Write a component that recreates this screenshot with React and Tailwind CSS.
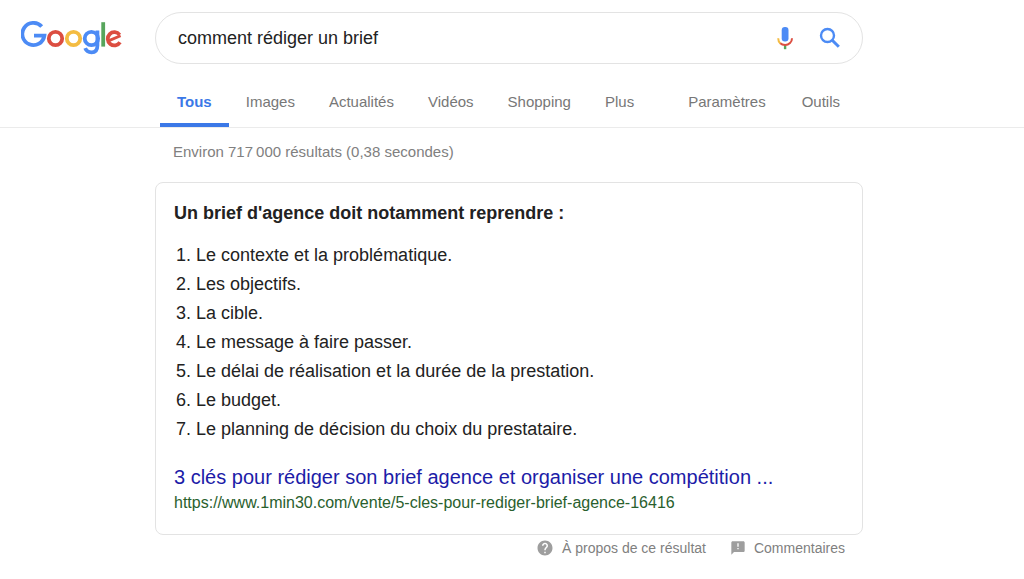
import { useState } from 'react'

const tabs = [
  { label: 'Tous', active: true },
  { label: 'Images' },
  { label: 'Actualités' },
  { label: 'Vidéos' },
  { label: 'Shopping' },
  { label: 'Plus' },
]

const tools = ['Paramètres', 'Outils']

const steps = [
  'Le contexte et la problématique.',
  'Les objectifs.',
  'La cible.',
  'Le message à faire passer.',
  'Le délai de réalisation et la durée de la prestation.',
  'Le budget.',
  'Le planning de décision du choix du prestataire.',
]

function Logo() {
  return (
    <svg viewBox="0 0 102 34" className="h-[34px] w-[102px]" fill="none" strokeWidth="3.8" role="img" aria-label="Google">
      <path d="M20.7 5.6A11.1 11.1 0 1 0 23.4 14.6H13" stroke="#4c8bf5" />
      <circle cx="34.5" cy="17.5" r="6.7" stroke="#dc4e41" />
      <circle cx="52.5" cy="17.5" r="6.7" stroke="#f4bc42" />
      <g stroke="#4c8bf5">
        <circle cx="70.4" cy="17.5" r="6.7" />
        <path d="M76.4 9.6V24.4C76.4 29.4 74 31.3 70.5 31.3C67.4 31.3 65.1 29.6 64.2 27.2" />
      </g>
      <path d="M82.2 1.2V25.6" stroke="#57a55c" />
      <path d="M99 21.2A6.6 6.6 0 1 1 98.6 13.8" stroke="#dc4e41" />
      <path d="M88 19.6L99.6 14.8" stroke="#dc4e41" strokeWidth="2.8" />
    </svg>
  )
}

function MicIcon() {
  return (
    <svg viewBox="0 0 24 24" className="h-6 w-6" fill="none" aria-hidden="true">
      <rect x="8.7" y="1" width="6.8" height="14.4" rx="3.2" fill="#4c8bf5" />
      <path d="M12.1 18.5V23.2" stroke="#57a55c" strokeWidth="2.4" />
      <path d="M5.2 12.2C5.2 14.4 6 16.2 7.4 17.4" stroke="#f4bc42" strokeWidth="2" />
      <path d="M7.3 17.3C8.5 18.5 10.2 19 12.1 19C16 19 19 16.1 19 12.2" stroke="#dc4e41" strokeWidth="2" />
    </svg>
  )
}

function SearchIcon() {
  return (
    <svg viewBox="0 0 24 24" className="h-6 w-6" fill="none" stroke="#4c8bf5" aria-hidden="true">
      <circle cx="9.5" cy="9.5" r="6.5" strokeWidth="2.4" />
      <path d="M14 14L20.8 20.8" strokeWidth="3" />
    </svg>
  )
}

function HelpIcon() {
  return (
    <svg viewBox="0 0 24 24" className="h-[18px] w-[18px]" fill="#9e9e9e" aria-hidden="true">
      <path d="M12 2C6.48 2 2 6.48 2 12s4.48 10 10 10 10-4.48 10-10S17.52 2 12 2zm1 17h-2v-2h2v2zm2.07-7.75l-.9.92C13.45 12.9 13 13.5 13 15h-2v-.5c0-1.1.45-2.1 1.17-2.83l1.24-1.26c.37-.36.59-.86.59-1.41 0-1.1-.9-2-2-2s-2 .9-2 2H8c0-2.21 1.79-4 4-4s4 1.79 4 4c0 .88-.36 1.68-.93 2.25z" />
    </svg>
  )
}

function FeedbackIcon() {
  return (
    <svg viewBox="0 0 24 24" className="h-4 w-4" fill="#9e9e9e" aria-hidden="true">
      <path d="M20 2H4c-1.1 0-2 .9-2 2v18l4-4h14c1.1 0 2-.9 2-2V4c0-1.1-.9-2-2-2zm-7 12h-2v-2h2v2zm0-4h-2V5h2v5z" />
    </svg>
  )
}

export default function App() {
  const [query, setQuery] = useState('comment rédiger un brief')

  return (
    <div className="min-h-screen bg-white font-['Liberation_Sans',Arial,sans-serif] text-[#222222]">
      <header className="border-b border-[#ebebeb]">
        <div className="flex pt-3">
          <a href="#" className="w-[155px] shrink-0 pt-[9px] pl-[21px]">
            <Logo />
          </a>
          <form
            role="search"
            onSubmit={(e) => e.preventDefault()}
            className="flex h-[52px] max-w-[708px] flex-1 items-center rounded-full border border-[#e3e3e3] pr-5 pl-[22px]"
          >
            <input
              type="text"
              aria-label="Rechercher"
              value={query}
              onChange={(e) => setQuery(e.target.value)}
              className="min-w-0 flex-1 bg-transparent text-lg outline-none"
            />
            <button type="button" aria-label="Recherche vocale" className="mr-[21px]">
              <MicIcon />
            </button>
            <button type="submit" aria-label="Recherche Google">
              <SearchIcon />
            </button>
          </form>
        </div>

        <nav className="ml-40 flex max-w-[700px] items-end justify-between pt-4 pr-5 text-[15px] leading-5 text-[#777777]">
          <div className="flex">
            {tabs.map((tab) => (
              <a
                key={tab.label}
                href="#"
                aria-current={tab.active ? 'page' : undefined}
                className={
                  tab.active
                    ? 'border-b-4 border-[#3b78e7] px-[17px] pt-3 pb-[11px] font-bold text-[#3b78e7]'
                    : 'border-b-4 border-transparent px-[17px] pt-3 pb-[11px]'
                }
              >
                {tab.label}
              </a>
            ))}
          </div>
          <div className="flex gap-9 pb-[15px]">
            {tools.map((tool) => (
              <a key={tool} href="#">
                {tool}
              </a>
            ))}
          </div>
        </nav>
      </header>

      <main className="ml-[155px] max-w-[708px]">
        <p className="pt-[14px] pl-[18px] text-[15px] leading-5 text-[#808080]">
          Environ 717&#8239;000 résultats (0,38 secondes)
        </p>

        <section className="mt-5 rounded-lg border border-[#e3e3e3] px-[18px] pt-4 pb-[19px]">
          <h2 className="text-lg leading-7 font-bold">Un brief d'agence doit notamment reprendre :</h2>
          <ol className="mt-[14px] list-decimal pl-[22px] text-lg leading-[29px]">
            {steps.map((step) => (
              <li key={step}>{step}</li>
            ))}
          </ol>
          <h3 className="mt-[19px] text-xl leading-7 text-[#1c1ca8]">
            <a href="#">3 clés pour rédiger son brief agence et organiser une compétition ...</a>
          </h3>
          <cite className="block text-base leading-6 text-[#29602d] not-italic">
            https://www.1min30.com/vente/5-cles-pour-rediger-brief-agence-16416
          </cite>
        </section>

        <footer className="flex justify-end gap-6 pt-[3px] pr-[18px] text-sm leading-5 text-[#808080]">
          <a href="#" className="flex items-center gap-2">
            <HelpIcon />
            À propos de ce résultat
          </a>
          <a href="#" className="flex items-center gap-2">
            <FeedbackIcon />
            Commentaires
          </a>
        </footer>
      </main>
    </div>
  )
}
